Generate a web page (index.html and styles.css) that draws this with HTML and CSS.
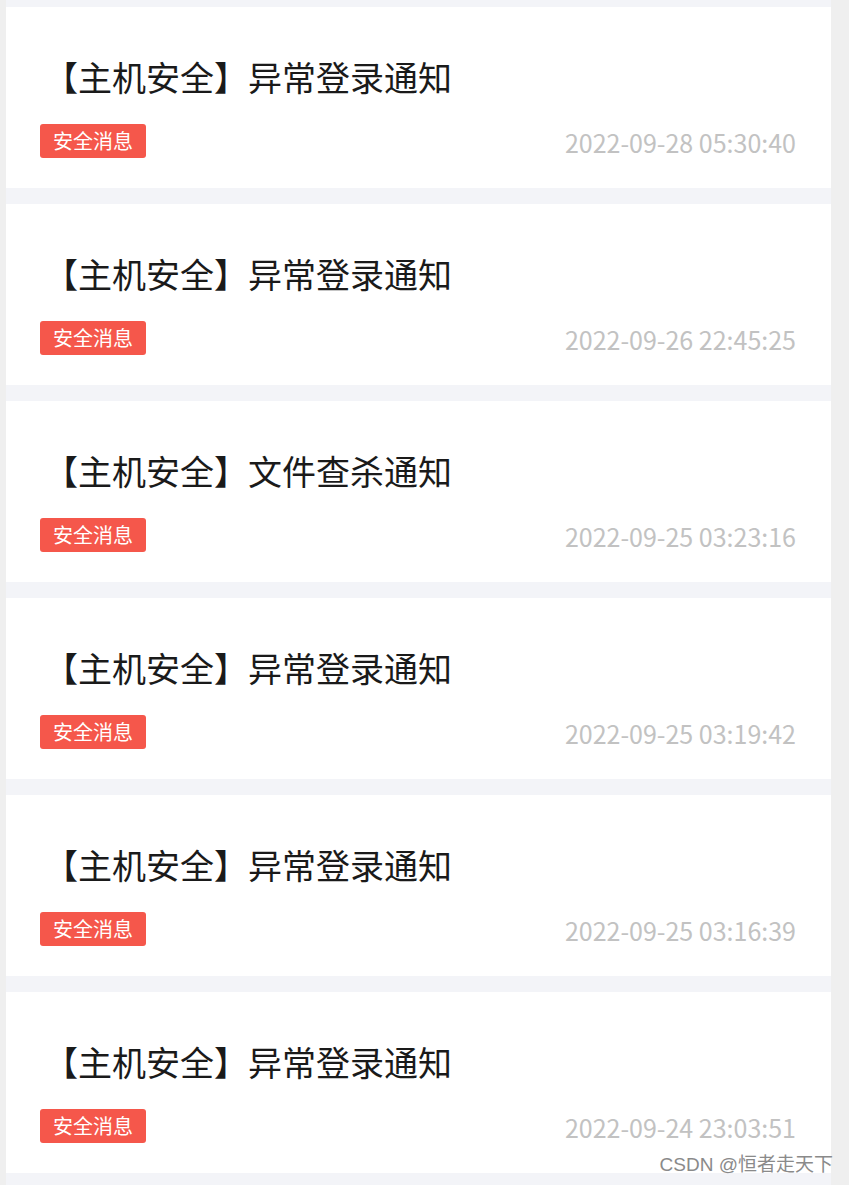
FILE: index.html
```html
<!DOCTYPE html>
<html lang="zh-CN">

<head>
    <meta charset="UTF-8">
    <meta name="viewport" content="width=device-width, initial-scale=1.0">
    <title>消息列表</title>
    <link rel="stylesheet" href="styles.css">
</head>

<body>
    <div class="list">
        <div class="card">
            <div class="title">【主机安全】异常登录通知</div>
            <div class="meta">
                <span class="tag">安全消息</span>
                <span class="time">2022-09-28 05:30:40</span>
            </div>
        </div>
        <div class="card">
            <div class="title">【主机安全】异常登录通知</div>
            <div class="meta">
                <span class="tag">安全消息</span>
                <span class="time">2022-09-26 22:45:25</span>
            </div>
        </div>
        <div class="card">
            <div class="title">【主机安全】文件查杀通知</div>
            <div class="meta">
                <span class="tag">安全消息</span>
                <span class="time">2022-09-25 03:23:16</span>
            </div>
        </div>
        <div class="card">
            <div class="title">【主机安全】异常登录通知</div>
            <div class="meta">
                <span class="tag">安全消息</span>
                <span class="time">2022-09-25 03:19:42</span>
            </div>
        </div>
        <div class="card">
            <div class="title">【主机安全】异常登录通知</div>
            <div class="meta">
                <span class="tag">安全消息</span>
                <span class="time">2022-09-25 03:16:39</span>
            </div>
        </div>
        <div class="card">
            <div class="title">【主机安全】异常登录通知</div>
            <div class="meta">
                <span class="tag">安全消息</span>
                <span class="time">2022-09-24 23:03:51</span>
            </div>
        </div>
    </div>

    <!-- watermark -->
    <div class="watermark">CSDN @恒者走天下</div>
</body>

</html>
```

FILE: styles.css
```css
body {
    font-family: "Noto Sans CJK SC", "Noto Sans", sans-serif;
    margin: 0;
    padding: 0;
    background-color: #efefef;
    position: relative;
    height: 1185px;
    overflow: hidden;
}

.list {
    width: 825px;
    margin-left: 6px;
    padding: 7px 0 12px;
    background-color: #f3f4f8;
    display: flex;
    flex-direction: column;
    gap: 16px;
}

.card {
    background-color: #fff;
    height: 181px;
    box-sizing: border-box;
    padding: 46px 35px 0 34px;
}

.title {
    font-size: 34px;
    line-height: 48px;
    color: #1a1a1a;
    white-space: nowrap;
    padding-left: 4px;
}

.meta {
    margin-top: 23px;
    display: flex;
    justify-content: space-between;
    align-items: center;
    height: 34px;
}

.tag {
    display: inline-block;
    height: 34px;
    line-height: 34px;
    padding: 0 13px;
    background-color: #f5574b;
    color: #fff;
    font-size: 20px;
    border-radius: 3px;
}

.time {
    font-size: 25px;
    color: #c2c2c2;
    line-height: 34px;
    padding-top: 2px;
}

.watermark {
    position: absolute;
    right: 16px;
    top: 1152px;
    font-family: "Liberation Sans", "Noto Sans CJK SC", sans-serif;
    font-size: 19px;
    color: #8a8a8a;
    line-height: 26px;
}
```
